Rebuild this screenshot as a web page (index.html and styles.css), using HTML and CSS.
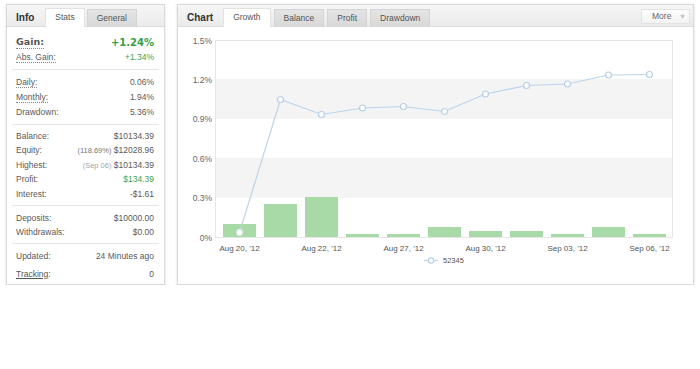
FILE: index.html
```html
<!DOCTYPE html>
<html>
<head>
<meta charset="utf-8">
<link rel="stylesheet" href="styles.css">
</head>
<body>
<div class="wrap">
  <section class="panel info">
    <div class="phead">
      <span class="ptitle">Info</span>
      <span class="tab active">Stats</span>
      <span class="tab">General</span>
    </div>
    <div class="group g1">
      <div class="row gain"><span class="u glbl">Gain:</span><span class="gval">+1.24%</span></div>
      <div class="row"><span class="u">Abs. Gain:</span><span class="green">+1.34%</span></div>
    </div>
    <div class="group g2">
      <div class="row r15"><span class="u">Daily:</span><span>0.06%</span></div>
      <div class="row r15"><span class="u">Monthly:</span><span>1.94%</span></div>
      <div class="row r15"><span>Drawdown:</span><span>5.36%</span></div>
    </div>
    <div class="group g3">
      <div class="row"><span>Balance:</span><span>$10134.39</span></div>
      <div class="row"><span>Equity:</span><span><span class="note">(118.69%)</span> $12028.96</span></div>
      <div class="row"><span>Highest:</span><span><span class="note light">(Sep 06)</span> $10134.39</span></div>
      <div class="row"><span>Profit:</span><span class="green">$134.39</span></div>
      <div class="row"><span>Interest:</span><span>-$1.61</span></div>
    </div>
    <div class="group g4">
      <div class="row"><span>Deposits:</span><span>$10000.00</span></div>
      <div class="row"><span>Withdrawals:</span><span>$0.00</span></div>
    </div>
    <div class="group g5">
      <div class="row"><span>Updated:</span><span>24 Minutes ago</span></div>
      <div class="row track"><span><span class="link">Tracking</span>:</span><span>0</span></div>
    </div>
  </section>

  <section class="panel chart">
    <div class="phead">
      <span class="ptitle">Chart</span>
      <span class="tab active">Growth</span>
      <span class="tab">Balance</span>
      <span class="tab">Profit</span>
      <span class="tab">Drawdown</span>
      <span class="more">More <span class="tri">&#9660;</span></span>
    </div>
    <svg class="plot" width="514" height="256" viewBox="178 27 514 256">
      <rect x="215" y="79" width="458" height="40" fill="#f4f4f4"/>
      <rect x="215" y="158" width="458" height="40" fill="#f4f4f4"/>
      <rect x="215.5" y="40.5" width="457" height="197" fill="none" stroke="#e6e6e6"/>
      <g class="ylab">
        <text x="212" y="44">1.5%</text>
        <text x="212" y="83">1.2%</text>
        <text x="212" y="122">0.9%</text>
        <text x="212" y="162">0.6%</text>
        <text x="212" y="201">0.3%</text>
        <text x="212" y="241">0%</text>
      </g>
      <g fill="#a8daa8">
        <rect x="223" y="224" width="33" height="13"/>
        <rect x="264" y="204" width="33" height="33"/>
        <rect x="305" y="197" width="33" height="40"/>
        <rect x="346" y="234" width="33" height="3"/>
        <rect x="387" y="234" width="33" height="3"/>
        <rect x="428" y="227" width="33" height="10"/>
        <rect x="469" y="231" width="33" height="6"/>
        <rect x="510" y="231" width="33" height="6"/>
        <rect x="551" y="234" width="33" height="3"/>
        <rect x="592" y="227" width="33" height="10"/>
        <rect x="633" y="234" width="33" height="3"/>
      </g>
      <polyline fill="none" stroke="#bcd4ea" stroke-width="1.2" points="239.5,232.5 280.5,99.5 321.5,114.5 362.5,108 403.5,106.5 444.5,111.5 485.5,94 526.5,85.5 567.5,84 608.5,75 649.5,74.5"/>
      <g fill="#fff" stroke="#b8d0e6" stroke-width="1.2">
        <circle cx="239.5" cy="232.5" r="2.8" stroke="#e4f0f8"/>
        <circle cx="280.5" cy="99.5" r="3"/>
        <circle cx="321.5" cy="114.5" r="3"/>
        <circle cx="362.5" cy="108" r="3"/>
        <circle cx="403.5" cy="106.5" r="3"/>
        <circle cx="444.5" cy="111.5" r="3"/>
        <circle cx="485.5" cy="94" r="3"/>
        <circle cx="526.5" cy="85.5" r="3"/>
        <circle cx="567.5" cy="84" r="3"/>
        <circle cx="608.5" cy="75" r="3"/>
        <circle cx="649.5" cy="74.5" r="3"/>
      </g>
      <g class="xlab">
        <text x="239.5" y="251">Aug 20, '12</text>
        <text x="321.5" y="251">Aug 22, '12</text>
        <text x="403.5" y="251">Aug 27, '12</text>
        <text x="485.5" y="251">Aug 30, '12</text>
        <text x="567.5" y="251">Sep 03, '12</text>
        <text x="649.5" y="251">Sep 06, '12</text>
      </g>
      <line x1="424" y1="260.5" x2="438" y2="260.5" stroke="#bcd4ea" stroke-width="1.2"/>
      <circle cx="431" cy="260.5" r="2.6" fill="#fff" stroke="#b8d0e6" stroke-width="1.2"/>
      <text class="legend" x="443" y="263">52345</text>
    </svg>
  </section>
</div>
</body>
</html>
```

FILE: styles.css
```css
html, body {
  margin: 0;
  padding: 0;
  background: #ffffff;
}

body {
  font-family: "Liberation Sans", Arial, sans-serif;
  font-size: 8.5px;
  color: #5a5a5a;
}

.wrap {
  display: flex;
  align-items: flex-start;
  gap: 12px;
  padding: 4px 0 0 6px;
}

.panel {
  box-sizing: border-box;
  height: 281px;
  border: 1px solid #dadada;
  background: #fff;
  box-shadow: 0 1px 3px rgba(0, 0, 0, 0.13);
}

.info {
  width: 159px;
}

.chart {
  width: 517px;
}

.phead {
  display: flex;
  align-items: flex-end;
  height: 21px;
  padding-left: 9px;
  background: linear-gradient(#f6f6f6, #ebebeb);
  border-bottom: 1px solid #dcdcdc;
}

.ptitle {
  font-weight: bold;
  font-size: 10px;
  color: #333;
  line-height: 17px;
  margin-right: 10px;
}

.info .ptitle {
  margin-right: 11px;
}

.tab {
  box-sizing: border-box;
  height: 18px;
  line-height: 17px;
  padding: 0 9px;
  margin-right: 2px;
  margin-bottom: -1px;
  border: 1px solid #d4d4d4;
  border-bottom: none;
  background: linear-gradient(#e4e4e4, #d8d8d8);
  color: #555;
  font-size: 8.5px;
}

.chart .tab {
  margin-right: 3px;
}

.tab.active {
  background: #ffffff;
  height: 19px;
  border-color: #e2e2e2;
}

.more {
  box-sizing: border-box;
  align-self: center;
  margin-left: auto;
  margin-right: 3px;
  margin-top: 1px;
  width: 49px;
  height: 15px;
  line-height: 13px;
  padding-left: 10px;
  border: 1px solid #e2e2e2;
  background: linear-gradient(#fdfdfd, #f3f3f3);
  color: #666;
  font-size: 8.5px;
}

.tri {
  font-size: 7.5px;
  color: #c4c4c4;
  margin-left: 5px;
}

.group {
  margin: 0 5px;
  border-top: 1px solid #e6e6e6;
}

.group.g1 {
  border-top: none;
  padding: 7px 0 4px;
}

.g2 {
  padding: 5px 0 4px;
}

.g3 {
  padding: 4px 0 3.5px;
}

.g4 {
  padding: 5px 0 3px;
}

.g5 {
  padding: 5px 0 0;
}

.row {
  display: flex;
  justify-content: space-between;
  align-items: center;
  height: 14.5px;
  padding: 0 5px 0 4px;
  white-space: nowrap;
}

.row.r15 {
  height: 15px;
}

.row.gain {
  height: 16px;
}

.row.track {
  margin-top: 3.5px;
}

.u {
  border-bottom: 1px dotted #8a8a8a;
  line-height: 10px;
}

.glbl {
  font-family: "DejaVu Sans", Verdana, sans-serif;
  font-weight: bold;
  font-size: 9.5px;
  color: #555;
  line-height: 12px;
}

.gval {
  font-family: "DejaVu Sans", Verdana, sans-serif;
  font-weight: bold;
  font-size: 10px;
  color: #33a04b;
}

.green {
  color: #3ba452;
}

.note {
  font-size: 7.5px;
  color: #777;
}

.note.light {
  color: #a8a8a8;
}

.link {
  text-decoration: underline;
  color: #555;
}

.plot {
  display: block;
}

.ylab text {
  font-family: "Liberation Sans", Arial, sans-serif;
  font-size: 8.5px;
  fill: #666;
  text-anchor: end;
}

.xlab text {
  font-family: "Liberation Sans", Arial, sans-serif;
  font-size: 8px;
  fill: #555;
  text-anchor: middle;
}

.legend {
  font-family: "Liberation Sans", Arial, sans-serif;
  font-size: 7.5px;
  fill: #555;
}
```
